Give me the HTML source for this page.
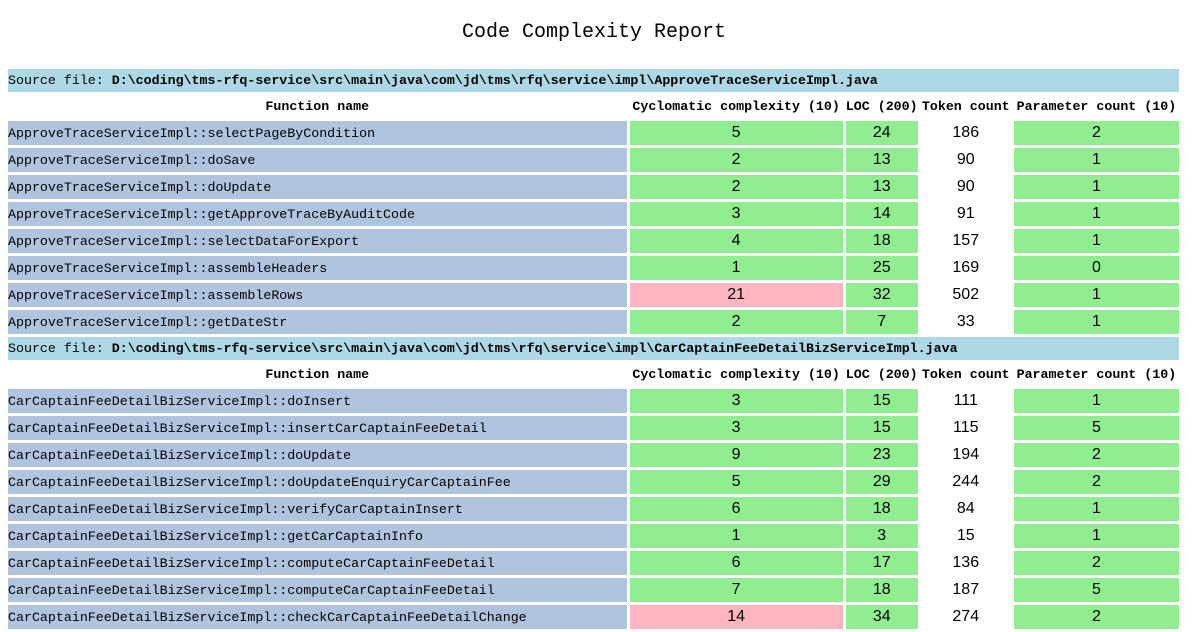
<!DOCTYPE html>
<html><head><meta charset="utf-8"><style>
body{margin:0;background:#fff;font-family:"Liberation Mono","Noto Sans CJK SC",monospace;}
h1{position:absolute;top:19px;left:0;width:1188px;text-align:center;margin:0;font-size:20px;font-weight:normal;line-height:28px;}
table{position:absolute;top:66px;left:5px;border-spacing:3px;table-layout:fixed;width:1177px;}
td,th{padding:0 0 0 0;font-size:13.3px;white-space:nowrap;overflow:hidden;}
tr.s td{background:#add8e6;height:23px;}
tr.h th{height:23px;font-weight:bold;text-align:center;}
tr.d td{height:24px;}
td.n{background:#b0c4de;}
td.v{text-align:center;font-family:"Liberation Sans",sans-serif;font-size:16px;}
.g{background:#90ee90;}.p{background:#ffb6c1;}
</style></head><body>
<h1>Code Complexity Report</h1>
<table>
<colgroup><col style="width:618px"><col style="width:213px"><col style="width:72px"><col style="width:90px"><col style="width:165px"></colgroup>
<tr class="s"><td colspan="5">Source file: <b>D:\coding\tms-rfq-service\src\main\java\com\jd\tms\rfq\service\impl\ApproveTraceServiceImpl.java</b></td></tr>
<tr class="h"><th>Function name</th><th>Cyclomatic complexity (10)</th><th>LOC (200)</th><th>Token count</th><th>Parameter count (10)</th></tr>
<tr class="d"><td class="n">ApproveTraceServiceImpl::selectPageByCondition</td><td class="v g">5</td><td class="v g">24</td><td class="v">186</td><td class="v g">2</td></tr>
<tr class="d"><td class="n">ApproveTraceServiceImpl::doSave</td><td class="v g">2</td><td class="v g">13</td><td class="v">90</td><td class="v g">1</td></tr>
<tr class="d"><td class="n">ApproveTraceServiceImpl::doUpdate</td><td class="v g">2</td><td class="v g">13</td><td class="v">90</td><td class="v g">1</td></tr>
<tr class="d"><td class="n">ApproveTraceServiceImpl::getApproveTraceByAuditCode</td><td class="v g">3</td><td class="v g">14</td><td class="v">91</td><td class="v g">1</td></tr>
<tr class="d"><td class="n">ApproveTraceServiceImpl::selectDataForExport</td><td class="v g">4</td><td class="v g">18</td><td class="v">157</td><td class="v g">1</td></tr>
<tr class="d"><td class="n">ApproveTraceServiceImpl::assembleHeaders</td><td class="v g">1</td><td class="v g">25</td><td class="v">169</td><td class="v g">0</td></tr>
<tr class="d"><td class="n">ApproveTraceServiceImpl::assembleRows</td><td class="v p">21</td><td class="v g">32</td><td class="v">502</td><td class="v g">1</td></tr>
<tr class="d"><td class="n">ApproveTraceServiceImpl::getDateStr</td><td class="v g">2</td><td class="v g">7</td><td class="v">33</td><td class="v g">1</td></tr>
<tr class="s"><td colspan="5">Source file: <b>D:\coding\tms-rfq-service\src\main\java\com\jd\tms\rfq\service\impl\CarCaptainFeeDetailBizServiceImpl.java</b></td></tr>
<tr class="h"><th>Function name</th><th>Cyclomatic complexity (10)</th><th>LOC (200)</th><th>Token count</th><th>Parameter count (10)</th></tr>
<tr class="d"><td class="n">CarCaptainFeeDetailBizServiceImpl::doInsert</td><td class="v g">3</td><td class="v g">15</td><td class="v">111</td><td class="v g">1</td></tr>
<tr class="d"><td class="n">CarCaptainFeeDetailBizServiceImpl::insertCarCaptainFeeDetail</td><td class="v g">3</td><td class="v g">15</td><td class="v">115</td><td class="v g">5</td></tr>
<tr class="d"><td class="n">CarCaptainFeeDetailBizServiceImpl::doUpdate</td><td class="v g">9</td><td class="v g">23</td><td class="v">194</td><td class="v g">2</td></tr>
<tr class="d"><td class="n">CarCaptainFeeDetailBizServiceImpl::doUpdateEnquiryCarCaptainFee</td><td class="v g">5</td><td class="v g">29</td><td class="v">244</td><td class="v g">2</td></tr>
<tr class="d"><td class="n">CarCaptainFeeDetailBizServiceImpl::verifyCarCaptainInsert</td><td class="v g">6</td><td class="v g">18</td><td class="v">84</td><td class="v g">1</td></tr>
<tr class="d"><td class="n">CarCaptainFeeDetailBizServiceImpl::getCarCaptainInfo</td><td class="v g">1</td><td class="v g">3</td><td class="v">15</td><td class="v g">1</td></tr>
<tr class="d"><td class="n">CarCaptainFeeDetailBizServiceImpl::computeCarCaptainFeeDetail</td><td class="v g">6</td><td class="v g">17</td><td class="v">136</td><td class="v g">2</td></tr>
<tr class="d"><td class="n">CarCaptainFeeDetailBizServiceImpl::computeCarCaptainFeeDetail</td><td class="v g">7</td><td class="v g">18</td><td class="v">187</td><td class="v g">5</td></tr>
<tr class="d"><td class="n">CarCaptainFeeDetailBizServiceImpl::checkCarCaptainFeeDetailChange</td><td class="v p">14</td><td class="v g">34</td><td class="v">274</td><td class="v g">2</td></tr>
</table>
</body></html>
